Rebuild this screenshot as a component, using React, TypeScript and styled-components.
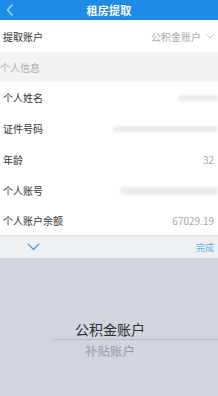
import styled, { createGlobalStyle } from "styled-components";

const GlobalStyle = createGlobalStyle`
  html, body {
    margin: 0;
    padding: 0;
    background: #ffffff;
    font-family: "Noto Sans CJK SC", "Noto Sans", sans-serif;
  }
  * { box-sizing: border-box; }
`;

const Screen = styled.div`
  width: 218px;
  height: 396px;
  display: flex;
  flex-direction: column;
  overflow: hidden;
  background: #ffffff;
`;

const NavBar = styled.header`
  height: 20px;
  flex: none;
  background: #1f8be6;
  display: flex;
  align-items: center;
  justify-content: center;
  position: relative;
`;

const BackButton = styled.span`
  position: absolute;
  left: 6px;
  top: 4px;
  display: flex;
`;

const NavTitle = styled.h1`
  margin: 0;
  font-size: 11px;
  font-weight: 700;
  color: #ffffff;
  letter-spacing: 0.2px;
`;

const Row = styled.div<{ $h?: number }>`
  height: ${(p) => p.$h ?? 31}px;
  flex: none;
  display: flex;
  align-items: center;
  justify-content: space-between;
  padding: 0 4px 0 3px;
  background: #ffffff;
`;

const Label = styled.span`
  font-size: 10px;
  color: #333333;
  white-space: nowrap;
`;

const Value = styled.span`
  font-size: 10px;
  color: #a9a9a9;
  display: flex;
  align-items: center;
  gap: 5px;
`;

const Section = styled.div`
  height: 30px;
  flex: none;
  display: flex;
  align-items: center;
  padding-left: 0;
  background: #f3f3f3;
  font-size: 10px;
  color: #aaaaaa;
`;

const Masked = styled.span<{ $w: number; $hgt?: number }>`
  width: ${(p) => p.$w}px;
  height: ${(p) => p.$hgt ?? 6}px;
  margin-right: -4px;
  background: #ececec;
  border-radius: 3px 0 0 3px;
  filter: blur(1px);
`;

const Toolbar = styled.div`
  height: 23px;
  flex: none;
  display: flex;
  align-items: center;
  justify-content: space-between;
  padding: 0 4px 0 27px;
  background: #eef1f4;
  border-top: 1px solid #dde1e6;
`;

const Done = styled.span`
  font-size: 9px;
  color: #5cb3e6;
`;

const Picker = styled.div`
  flex: 1;
  background: #d2d5dd;
  display: flex;
  flex-direction: column;
  align-items: flex-end;
  padding-top: 61px;
`;

const PickerItem = styled.div<{ $active?: boolean }>`
  width: 100%;
  height: 20px;
  flex: none;
  display: flex;
  align-items: center;
  justify-content: center;
  font-size: ${(p) => (p.$active ? 14 : 12.5)}px;
  color: ${(p) => (p.$active ? "#2e2e33" : "#9a9ca3")};
  padding-left: 2px;
`;

const PickerLine = styled.div`
  width: 165px;
  height: 1px;
  flex: none;
  background: #b9bcc4;
`;

function Chevron({ color, size = 10 }: { color: string; size?: number }) {
  return (
    <svg width={size} height={size * 0.6} viewBox="0 0 10 6" fill="none">
      <path d="M1 1 L5 5 L9 1" stroke={color} strokeWidth="1" strokeLinecap="round" strokeLinejoin="round" />
    </svg>
  );
}

export default function App() {
  return (
    <Screen>
      <GlobalStyle />
      <NavBar>
        <BackButton>
          <svg width="7" height="12" viewBox="0 0 7 12" fill="none">
            <path d="M6 1 L1.5 6 L6 11" stroke="#9fd6ff" strokeWidth="1.6" strokeLinecap="round" strokeLinejoin="round" />
          </svg>
        </BackButton>
        <NavTitle>租房提取</NavTitle>
      </NavBar>
      <Row $h={32}>
        <Label>提取账户</Label>
        <Value>
          公积金账户
          <Chevron color="#b5b5b5" size={8} />
        </Value>
      </Row>
      <Section>个人信息</Section>
      <Row>
        <Label>个人姓名</Label>
        <Masked $w={40} />
      </Row>
      <Row>
        <Label>证件号码</Label>
        <Masked $w={105} />
      </Row>
      <Row>
        <Label>年龄</Label>
        <Value>32</Value>
      </Row>
      <Row>
        <Label>个人账号</Label>
        <Masked $w={98} $hgt={8} />
      </Row>
      <Row $h={29}>
        <Label>个人账户余额</Label>
        <Value>67029.19</Value>
      </Row>
      <Toolbar>
        <Chevron color="#4a9fe0" size={13} />
        <Done>完成</Done>
      </Toolbar>
      <Picker>
        <PickerItem $active>公积金账户</PickerItem>
        <PickerLine />
        <PickerItem>补贴账户</PickerItem>
      </Picker>
    </Screen>
  );
}
